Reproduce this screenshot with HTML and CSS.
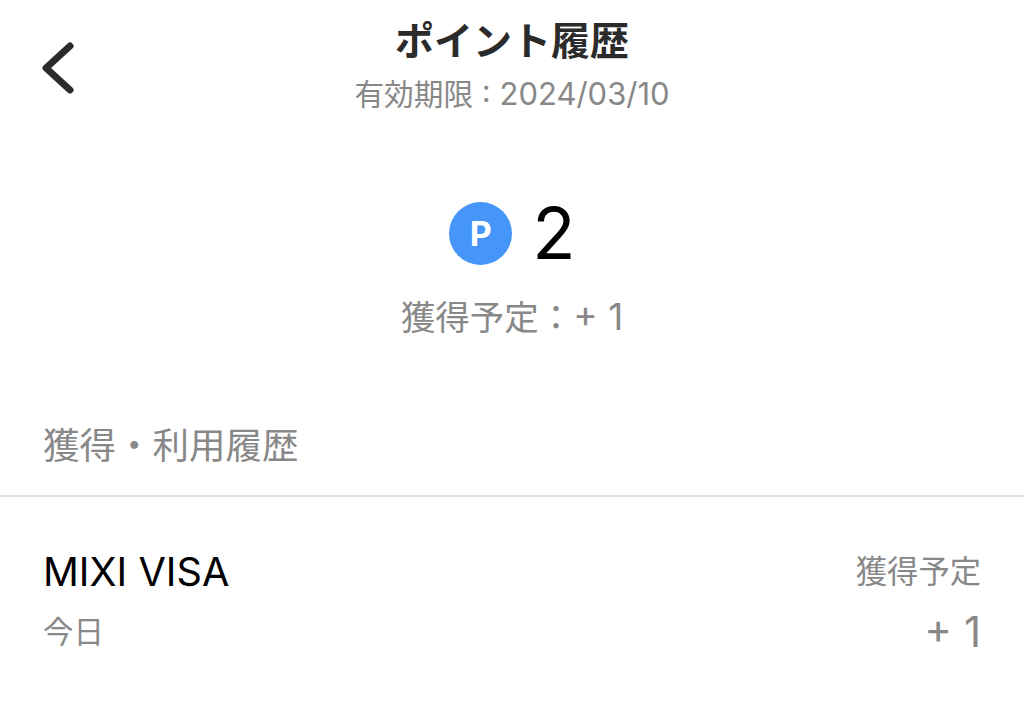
FILE: index.html
```html
<!DOCTYPE html>
<html lang="ja">
<head>
  <meta charset="UTF-8" />
  <title>ポイント履歴</title>
  <link rel="stylesheet" href="styles.css">
</head>
<body>
  <header class="top">
    <svg class="back" width="36" height="56" viewBox="0 0 36 56"><path d="M30 6 L6 28 L30 50" fill="none" stroke="#2b2b2b" stroke-width="7" stroke-linecap="round" stroke-linejoin="round"/></svg>
    <h1>ポイント履歴</h1>
    <p class="expire"><span class="expire-label">有効期限</span> : 2024/03/10</p>
  </header>

  <section class="balance">
    <div class="points">
      <span class="coin">P</span>
      <span class="amount">2</span>
    </div>
    <p class="pending">獲得予定：<span class="pending-num">+ 1</span></p>
  </section>

  <h2 class="history-title">獲得・利用履歴</h2>

  <div class="row">
    <div>
      <div class="row-name">MIXI VISA</div>
      <div class="row-date">今日</div>
    </div>
    <div class="row-right">
      <div class="row-status">獲得予定</div>
      <div class="row-value">+ 1</div>
    </div>
  </div>
</body>
</html>
```

FILE: styles.css
```css
* {
  box-sizing: border-box;
}

html, body {
  height: 701px;
  overflow: hidden;
}

body {
  margin: 0;
  background: #fff;
  color: #000;
  font-family: "Inter", "Noto Sans CJK JP", sans-serif;
}

h1, h2, p {
  margin: 0;
  font-weight: normal;
}

.top {
  position: relative;
  padding-top: 17px;
  text-align: center;
}

.back {
  position: absolute;
  left: 40px;
  top: 40px;
}

h1 {
  font-size: 39px;
  line-height: 48px;
  font-weight: 700;
  color: #2b2b2b;
}

.expire {
  margin-top: 8px;
  font-size: 31px;
  line-height: 42px;
  color: #888;
}

.expire-label {
  font-size: 29.7px;
}

.balance {
  margin-top: 78px;
  text-align: center;
}

.points {
  display: flex;
  justify-content: center;
  align-items: center;
  gap: 20px;
  height: 80px;
  padding-left: 1px;
}

.coin {
  width: 63px;
  height: 63px;
  border-radius: 50%;
  background: #4596f8;
  color: #fff;
  font-size: 34px;
  font-weight: 700;
  display: flex;
  align-items: center;
  justify-content: center;
}

.amount {
  font-size: 71px;
  line-height: 80px;
}

.pending {
  margin-top: 20px;
  font-size: 34.5px;
  line-height: 48px;
  color: #888;
}

.pending-num {
  font-size: 37px;
}

.history-title {
  margin-top: 80px;
  padding: 0 43px 25px;
  font-size: 36.5px;
  line-height: 48px;
  color: #888;
  border-bottom: 2px solid #e4e4e4;
}

.row {
  display: flex;
  justify-content: space-between;
  padding: 50px 43px 0;
}

.row-name {
  font-size: 39.7px;
  line-height: 50px;
}

.row-date {
  margin-top: 14px;
  font-size: 30.5px;
  line-height: 42px;
  color: #888;
}

.row-right {
  text-align: right;
}

.row-status {
  font-size: 31.3px;
  line-height: 50px;
  color: #888;
}

.row-value {
  margin-top: 13px;
  font-size: 42px;
  line-height: 44px;
  color: #888;
}
```
